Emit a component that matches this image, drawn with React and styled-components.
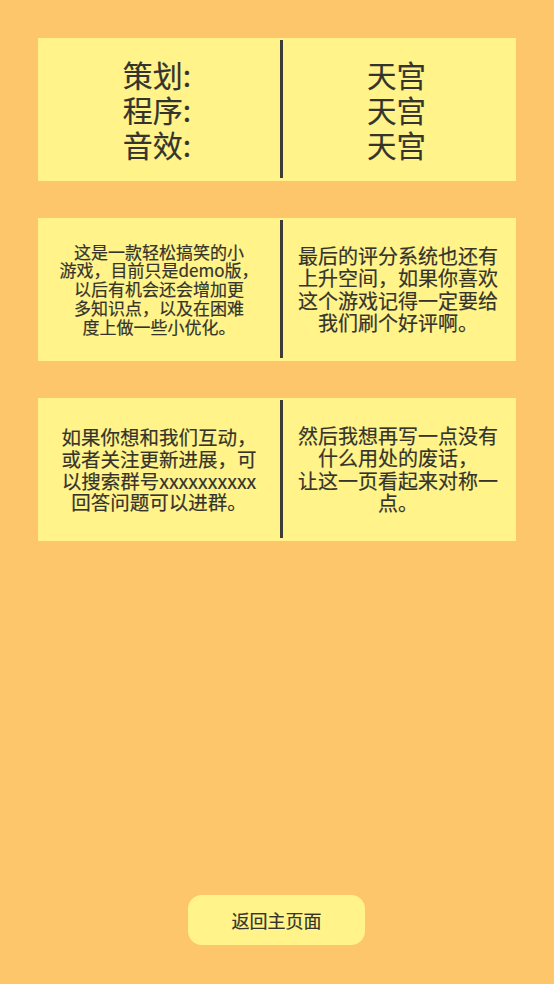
import React from "react";
import styled, { createGlobalStyle } from "styled-components";

const Global = createGlobalStyle`
  html, body { margin: 0; padding: 0; background: #fec66b; }
  body { font-family: "Noto Sans CJK SC", "Noto Sans", sans-serif; }
  * { box-sizing: border-box; }
`;

const Page = styled.div`
  width: 554px;
  height: 984px;
  background: #fec66b;
  display: flex;
  flex-direction: column;
  align-items: center;
  padding: 38px 38px 39px;
  color: #34342c;
`;

const Panels = styled.div`
  width: 478px;
  display: flex;
  flex-direction: column;
  gap: 37px;
`;

const Panel = styled.div`
  height: 143px;
  background: #fff38a;
  display: grid;
  grid-template-columns: 242px 3px 1fr;
  align-items: center;
`;

const Divider = styled.div`
  align-self: stretch;
  margin: 2px 0 3px;
  background: #3c3c38;
`;

const Cell = styled.div`
  text-align: center;
  font-size: ${(p) => p.$size}px;
  line-height: ${(p) => p.$lh}px;
  font-weight: 400;
  white-space: nowrap;
  padding-right: ${(p) => p.$shift || 0}px;
  -webkit-text-stroke: 0.2px #34342c;
`;

const Spacer = styled.div`
  flex: 1;
`;

const BackButton = styled.button`
  width: 177px;
  height: 50px;
  border: none;
  border-radius: 14px;
  background: #fff38a;
  color: #34342c;
  font-family: "Noto Sans CJK SC", "Noto Sans", sans-serif;
  font-size: 18px;
  font-weight: 400;
  cursor: pointer;
  margin-left: -1px;
  -webkit-text-stroke: 0.2px #34342c;
`;

const Lines = ({ lines }) =>
  lines.map((l, i) => (
    <React.Fragment key={i}>
      {l}
      {i < lines.length - 1 && <br />}
    </React.Fragment>
  ));

export default function App() {
  return (
    <>
      <Global />
      <Page>
        <Panels>
          <Panel>
            <Cell $size={30} $lh={35} $shift={4}>
              <Lines lines={["策划:", "程序:", "音效:"]} />
            </Cell>
            <Divider />
            <Cell $size={29.5} $lh={35} $shift={6}>
              <Lines lines={["天宫", "天宫", "天宫"]} />
            </Cell>
          </Panel>
          <Panel>
            <Cell $size={17} $lh={18.8}>
              <Lines
                lines={[
                  "这是一款轻松搞笑的小",
                  "游戏，目前只是demo版，",
                  "以后有机会还会增加更",
                  "多知识点，以及在困难",
                  "度上做一些小优化。",
                ]}
              />
            </Cell>
            <Divider />
            <Cell $size={20} $lh={22.5} $shift={3}>
              <Lines
                lines={[
                  "最后的评分系统也还有",
                  "上升空间，如果你喜欢",
                  "这个游戏记得一定要给",
                  "我们刷个好评啊。",
                ]}
              />
            </Cell>
          </Panel>
          <Panel>
            <Cell $size={19.5} $lh={21.8}>
              <Lines
                lines={[
                  "如果你想和我们互动，",
                  "或者关注更新进展，可",
                  "以搜索群号xxxxxxxxxx",
                  "回答问题可以进群。",
                ]}
              />
            </Cell>
            <Divider />
            <Cell $size={20} $lh={22.5} $shift={3}>
              <Lines
                lines={[
                  "然后我想再写一点没有",
                  "什么用处的废话，",
                  "让这一页看起来对称一",
                  "点。",
                ]}
              />
            </Cell>
          </Panel>
        </Panels>
        <Spacer />
        <BackButton>返回主页面</BackButton>
      </Page>
    </>
  );
}
